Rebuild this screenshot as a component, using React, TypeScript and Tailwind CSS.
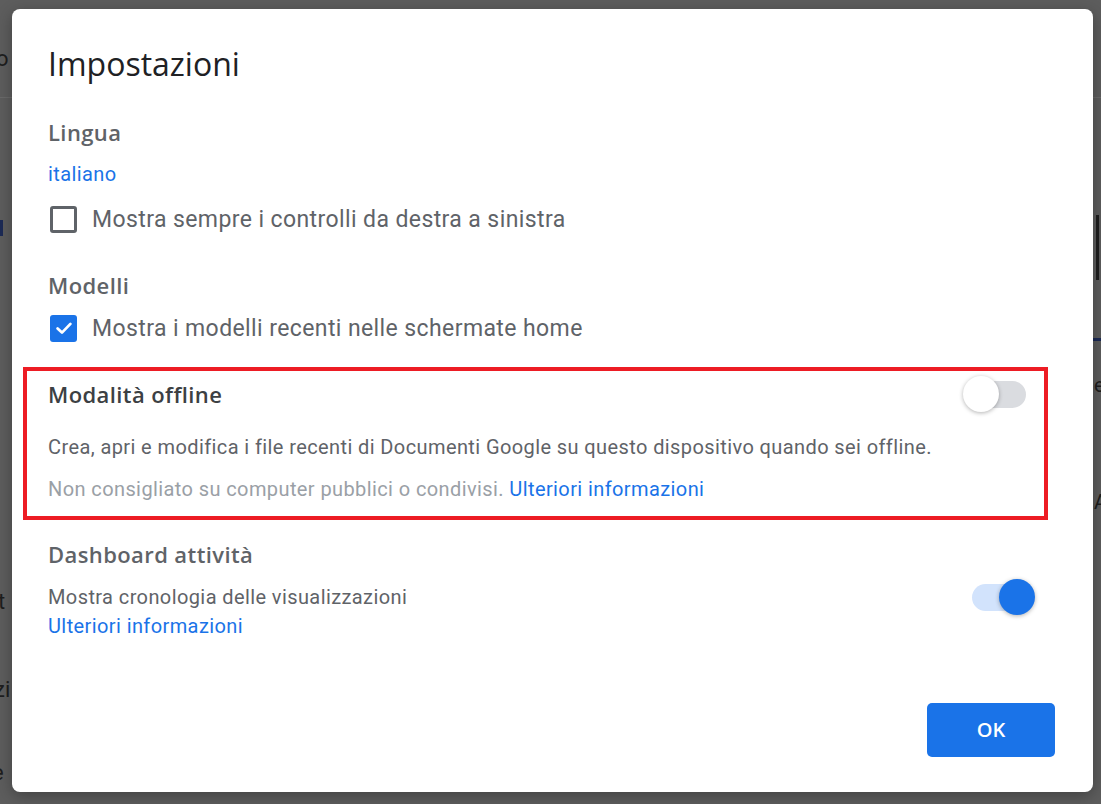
import React from 'react';

const heading = "font-['Open_Sans',sans-serif]";
const body = "font-['Roboto',sans-serif]";

const Checkbox: React.FC<{ checked?: boolean }> = ({ checked }) =>
  checked ? (
    <span className="flex h-[27px] w-[27px] shrink-0 items-center justify-center rounded-[3px] bg-[#1a73e8]">
      <svg viewBox="0 0 24 24" className="h-[22px] w-[22px]">
        <polyline points="5,12.5 9.8,17 19,7.5" fill="none" stroke="#fff" strokeWidth="3" strokeLinecap="round" strokeLinejoin="round" />
      </svg>
    </span>
  ) : (
    <span className="block h-[27px] w-[27px] shrink-0 rounded-[3px] border-[3px] border-[#5f6368]" />
  );

const Toggle: React.FC<{ on?: boolean }> = ({ on }) => (
  <div className="relative h-9 w-[70px] shrink-0">
    <div className={`absolute left-[7px] right-[7px] top-[4.5px] h-[27px] rounded-full ${on ? 'bg-[#d2e3fc]' : 'bg-[#dadce0]'}`} />
    <div
      className={`absolute top-0 h-9 w-9 rounded-full shadow-[0_1px_4px_rgba(0,0,0,0.3)] ${on ? 'right-0 bg-[#1a73e8]' : 'left-0 bg-white'}`}
    />
  </div>
);

export default function App() {
  return (
    <div className="relative h-[804px] w-[1101px] overflow-hidden bg-[#5d5d5d]">
      {/* dimmed page behind the dialog */}
      <div className="absolute left-0 top-[97px] h-px w-[12px] bg-[#6a6a6a]" />
      <div aria-hidden className={`absolute left-[-4px] top-[42px] text-[22px] text-[#1e1e1e] ${body}`}>o</div>
      <div className="absolute left-0 top-[220px] h-[16px] w-[3px] bg-[#1c2a55]" />
      <div aria-hidden className={`absolute left-[-2px] top-[585px] text-[22px] text-[#1e1e1e] ${body}`}>t</div>
      <div aria-hidden className={`absolute left-[-6px] top-[673px] text-[22px] text-[#1e1e1e] ${body}`}>zi</div>
      <div aria-hidden className={`absolute left-[-8px] top-[756px] text-[22px] text-[#1e1e1e] ${body}`}>e</div>
      <div className="absolute right-0 top-[97px] h-px w-[8px] bg-[#6a6a6a]" />
      <div className="absolute right-[2px] top-[215px] h-[65px] w-[3px] bg-[#1e1e1e]" />
      <div className="absolute right-0 top-[338px] h-[3px] w-[8px] bg-[#1c2a55]" />
      <div aria-hidden className={`absolute left-[1094px] top-[370px] text-[20px] text-[#1e1e1e] ${body}`}>e</div>
      <div aria-hidden className={`absolute left-[1094px] top-[487px] text-[20px] text-[#1e1e1e] ${body}`}>A</div>

      {/* dialog */}
      <div className="absolute left-[12px] top-[9px] flex h-[783px] w-[1081px] flex-col rounded-[8px] bg-white shadow-[0_4px_16px_rgba(0,0,0,0.3)]">
        <div className="flex flex-col pl-[36px] pr-[58px] pt-[35px]">
          <h1 className={`h-10 text-[32px] leading-10 text-[#202124] ${heading}`}>Impostazioni</h1>

          <h2 className={`mt-[34px] h-7 text-[22px] font-semibold leading-7 tracking-[0.4px] text-[#5f6368] ${heading}`}>Lingua</h2>
          <a className={`mt-[14px] h-7 text-[20px] leading-7 tracking-[0.4px] text-[#1a73e8] ${body}`}>italiano</a>
          <label className="mt-[17px] flex h-7 items-center gap-[15px] pl-[2px]">
            <Checkbox />
            <span className={`pt-[2px] text-[23px] leading-7 tracking-[0.4px] text-[#5f6368] ${body}`}>Mostra sempre i controlli da destra a sinistra</span>
          </label>

          <h2 className={`mt-[38px] h-7 text-[22px] font-semibold leading-7 tracking-[0.4px] text-[#5f6368] ${heading}`}>Modelli</h2>
          <label className="mt-[15px] flex h-7 items-center gap-[15px] pl-[2px]">
            <Checkbox checked />
            <span className={`pt-[2px] text-[23px] leading-7 tracking-[0.4px] text-[#5f6368] ${body}`}>Mostra i modelli recenti nelle schermate home</span>
          </label>

          <section className="-ml-[25px] -mr-[13px] mt-[25px] border-[4px] border-[#ed1c24] pb-[13px] pl-[21px] pr-[11px] pt-[5px]">
            <div className="flex h-9 items-center justify-between">
              <h2 className={`text-[22px] font-semibold leading-7 tracking-[0.4px] text-[#3c4043] ${heading}`}>Modalità offline</h2>
              <Toggle />
            </div>
            <p className={`mt-[21px] text-[20px] leading-7 tracking-[0.4px] text-[#5f6368] ${body}`}>
              Crea, apri e modifica i file recenti di Documenti Google su questo dispositivo quando sei offline.
            </p>
            <p className={`mt-[14px] text-[20px] leading-7 tracking-[0.4px] text-[#9aa0a6] ${body}`}>
              Non consigliato su computer pubblici o condivisi. <a className="text-[#1a73e8]">Ulteriori informazioni</a>
            </p>
          </section>

          <h2 className={`mt-[20px] h-7 text-[22px] font-semibold leading-7 tracking-[0.4px] text-[#5f6368] ${heading}`}>Dashboard attività</h2>
          <div className="mt-[15px] flex items-start justify-between">
            <div className={`flex flex-col text-[20px] leading-[29px] tracking-[0.4px] ${body}`}>
              <span className="text-[#5f6368]">Mostra cronologia delle visualizzazioni</span>
              <a className="text-[#1a73e8]">Ulteriori informazioni</a>
            </div>
            <div className="-mt-[4px]">
              <Toggle on />
            </div>
          </div>
        </div>

        <div className="mt-auto flex justify-end pb-[35px] pr-[38px]">
          <button className={`h-[54px] w-[128px] rounded-[5px] bg-[#1a73e8] text-[20px] font-semibold text-white ${heading}`}>OK</button>
        </div>
      </div>
    </div>
  );
}
